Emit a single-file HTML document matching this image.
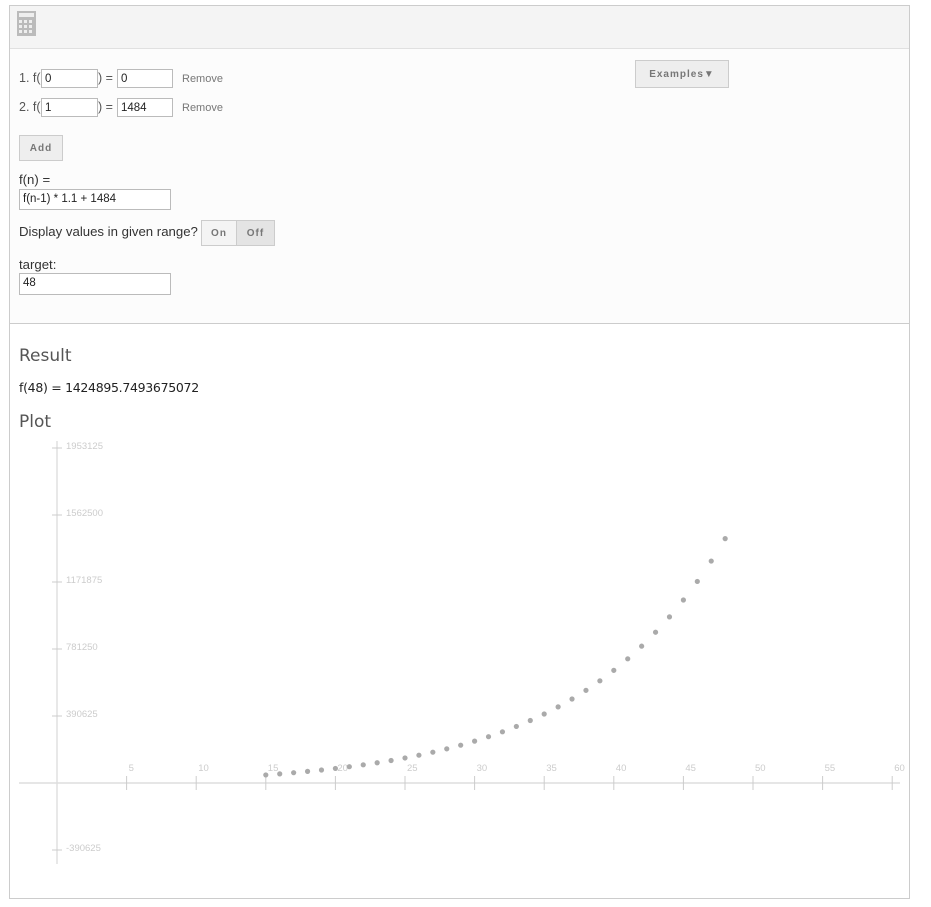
<!DOCTYPE html>
<html><head><meta charset="utf-8"><style>
body{margin:0;background:#fff;font-family:"Liberation Sans",Arial,sans-serif;width:931px;height:907px;position:relative;overflow:hidden}
.a{position:absolute}
.box{left:9px;top:5px;width:899px;height:892px;border:1px solid #ccc}
.hdr{left:10px;top:6px;width:899px;height:42px;background:#f4f4f4;border-bottom:1px solid #e0e0e0}
.form{left:10px;top:49px;width:899px;height:274px;background:#fcfcfc;border-bottom:1px solid #ccc}
.t{font-size:13.2px;color:#333}
.lbl{font-size:12.5px;color:#555}
.in{background:#fff;border:1px solid #bbb;height:19px;box-sizing:border-box;font-size:11.5px;color:#222;padding:2px 3px;line-height:14px}
.btn{background:#eee;border:1px solid #ccc;box-sizing:border-box;font-size:10px;font-weight:bold;color:#777;letter-spacing:1px;text-align:center}
.rm{font-size:11px;color:#777}
h2{margin:0;font-weight:normal;font-family:"DejaVu Sans","Liberation Sans",sans-serif;color:#555;font-size:17px}
</style></head><body>
<div class="a box"></div>
<div class="a hdr"></div>
<svg class="a" style="left:17px;top:11px" width="20" height="26" viewBox="0 0 20 26"><rect x="0" y="0" width="19" height="25" fill="#bbb"/><rect x="2" y="2" width="15" height="4" fill="#eee"/>
<g fill="#eee"><rect x="2" y="9" width="3" height="3"/><rect x="7" y="9" width="3" height="3"/><rect x="12" y="9" width="3" height="3"/><rect x="2" y="14" width="3" height="3"/><rect x="7" y="14" width="3" height="3"/><rect x="12" y="14" width="3" height="3"/><rect x="2" y="19" width="3" height="3"/><rect x="7" y="19" width="3" height="3"/><rect x="12" y="19" width="3" height="3"/></g></svg>
<div class="a form"></div>
<div class="a lbl" style="left:19px;top:71px">1. f(</div>
<div class="a in" style="left:41px;top:69px;width:57px">0</div>
<div class="a lbl" style="left:98px;top:71px">) =</div>
<div class="a in" style="left:117px;top:69px;width:56px">0</div>
<div class="a rm" style="left:182px;top:73px">Remove</div>
<div class="a lbl" style="left:19px;top:100px">2. f(</div>
<div class="a in" style="left:41px;top:98px;width:57px">1</div>
<div class="a lbl" style="left:98px;top:100px">) =</div>
<div class="a in" style="left:117px;top:98px;width:56px">1484</div>
<div class="a rm" style="left:182px;top:102px">Remove</div>
<div class="a btn" style="left:19px;top:135px;width:44px;height:26px;line-height:25px">Add</div>
<div class="a btn" style="left:635px;top:60px;width:94px;height:28px;line-height:27px">Examples▼</div>
<div class="a t" style="left:19px;top:172px">f(n) =</div>
<div class="a in" style="left:19px;top:189px;width:152px;height:21px">f(n-1) * 1.1 + 1484</div>
<div class="a t" style="left:19px;top:224px">Display values in given range?</div>
<div class="a btn" style="left:201px;top:220px;width:36px;height:26px;line-height:25px;background:#f4f4f4">On</div>
<div class="a btn" style="left:236px;top:220px;width:39px;height:26px;line-height:25px;background:#e4e4e4">Off</div>
<div class="a t" style="left:19px;top:257px">target:</div>
<div class="a in" style="left:19px;top:273px;width:152px;height:22px">48</div>
<h2 class="a" style="left:19px;top:346px">Result</h2>
<div class="a" style="left:19px;top:380px;font-size:12.5px;color:#222;font-family:'DejaVu Sans',sans-serif;letter-spacing:-0.3px">f(48) = 1424895.7493675072</div>
<h2 class="a" style="left:19px;top:412px">Plot</h2>
<svg id="p" class="a" style="left:0;top:0" width="931" height="907" font-family="Liberation Sans" font-size="9.5" fill="#ccc">
<line x1="57" y1="441" x2="57" y2="864" stroke="#e0e0e0" stroke-width="1.5"/>
<line x1="19" y1="783" x2="900" y2="783" stroke="#ddd" stroke-width="1.5"/>
</svg>
<script>
var s=document.getElementById('p'),h='';
var k=67/390625;
for(var i=1;i<=12;i++){var x=57+i*5*13.92;h+='<line x1="'+x+'" y1="776" x2="'+x+'" y2="790" stroke="#ccc"/><text x="'+(x+2)+'" y="771">'+(i*5)+'</text>';}
var yl=[1953125,1562500,1171875,781250,390625,-390625];
yl.forEach(function(v){var y=783-v*k;h+='<line x1="52" y1="'+y+'" x2="62" y2="'+y+'" stroke="#ccc"/><text x="66" y="'+(y+1)+'">'+v+'</text>';});
for(var n=15;n<=48;n++){var v=14840*(Math.pow(1.1,n)-1);h+='<circle cx="'+(57+n*13.92)+'" cy="'+(783-v*k)+'" r="2.6" fill="#aaa"/>';}
s.insertAdjacentHTML('beforeend',h);
</script>
</body></html>
